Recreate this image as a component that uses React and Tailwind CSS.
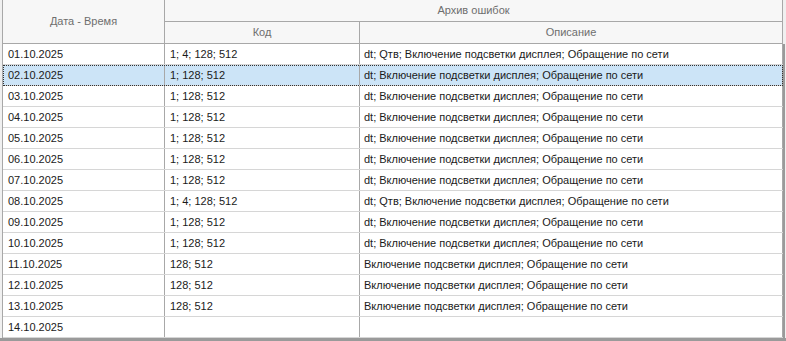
const DESC = "Включение подсветки дисплея; Обращение по сети";

const rows = [
  { date: "01.10.2025", code: "1; 4; 128; 512", desc: "dt; Qтв; " + DESC },
  { date: "02.10.2025", code: "1; 128; 512", desc: "dt; " + DESC, selected: true },
  { date: "03.10.2025", code: "1; 128; 512", desc: "dt; " + DESC },
  { date: "04.10.2025", code: "1; 128; 512", desc: "dt; " + DESC },
  { date: "05.10.2025", code: "1; 128; 512", desc: "dt; " + DESC },
  { date: "06.10.2025", code: "1; 128; 512", desc: "dt; " + DESC },
  { date: "07.10.2025", code: "1; 128; 512", desc: "dt; " + DESC },
  { date: "08.10.2025", code: "1; 4; 128; 512", desc: "dt; Qтв; " + DESC },
  { date: "09.10.2025", code: "1; 128; 512", desc: "dt; " + DESC },
  { date: "10.10.2025", code: "1; 128; 512", desc: "dt; " + DESC },
  { date: "11.10.2025", code: "128; 512", desc: DESC },
  { date: "12.10.2025", code: "128; 512", desc: DESC },
  { date: "13.10.2025", code: "128; 512", desc: DESC },
  { date: "14.10.2025", code: "", desc: "" },
];

function Row({ row }) {
  return (
    <div
      className={`flex h-[21px] border-b border-[#d6d6d6] ${
        row.selected
          ? "bg-[#cce4f7] outline-1 outline-dotted outline-[#333] -outline-offset-1"
          : "bg-white"
      }`}
    >
      <div className="w-[162px] shrink-0 border-r border-[#a8a8a8] pl-[5px] leading-[20px]">
        {row.date}
      </div>
      <div className="w-[195px] shrink-0 border-r border-[#a8a8a8] pl-[5px] leading-[20px]">
        {row.code}
      </div>
      <div className="flex-1 border-r border-[#a8a8a8] pl-[4px] leading-[20px] whitespace-nowrap">
        {row.desc}
      </div>
    </div>
  );
}

export default function App() {
  return (
    <div
      className="w-[786px] h-[341px] bg-[#f0f0f0] flex flex-col text-[11px] text-[#1a1a1a]"
      style={{ fontFamily: '"Liberation Sans", Arial, sans-serif' }}
    >
      <div className="flex flex-1 pl-[2px] pr-[1px]">
        <div className="flex-1 flex flex-col border-l border-[#a8a8a8]">
          {/* header */}
          <div className="flex h-[44px] bg-[#f7f7f7] text-[#6e6e6e] border-b border-[#a8a8a8]">
            <div className="w-[162px] shrink-0 border-r border-[#a8a8a8] flex items-center justify-center">
              Дата - Время
            </div>
            <div className="flex-1 flex flex-col border-r border-[#a8a8a8]">
              <div className="h-[22px] border-b border-[#a8a8a8] flex items-center justify-center">
                Архив ошибок
              </div>
              <div className="flex flex-1">
                <div className="w-[195px] shrink-0 border-r border-[#a8a8a8] flex items-center justify-center">
                  Код
                </div>
                <div className="flex-1 flex items-center justify-center">
                  Описание
                </div>
              </div>
            </div>
          </div>
          {/* body */}
          <div className="flex flex-col">
            {rows.map((r) => (
              <Row key={r.date} row={r} />
            ))}
          </div>
        </div>
        <div className="w-[2px] mt-[44px] bg-[#9a9a9a]" />
      </div>
      <div className="h-[3px] bg-[#9a9a9a]" />
    </div>
  );
}
